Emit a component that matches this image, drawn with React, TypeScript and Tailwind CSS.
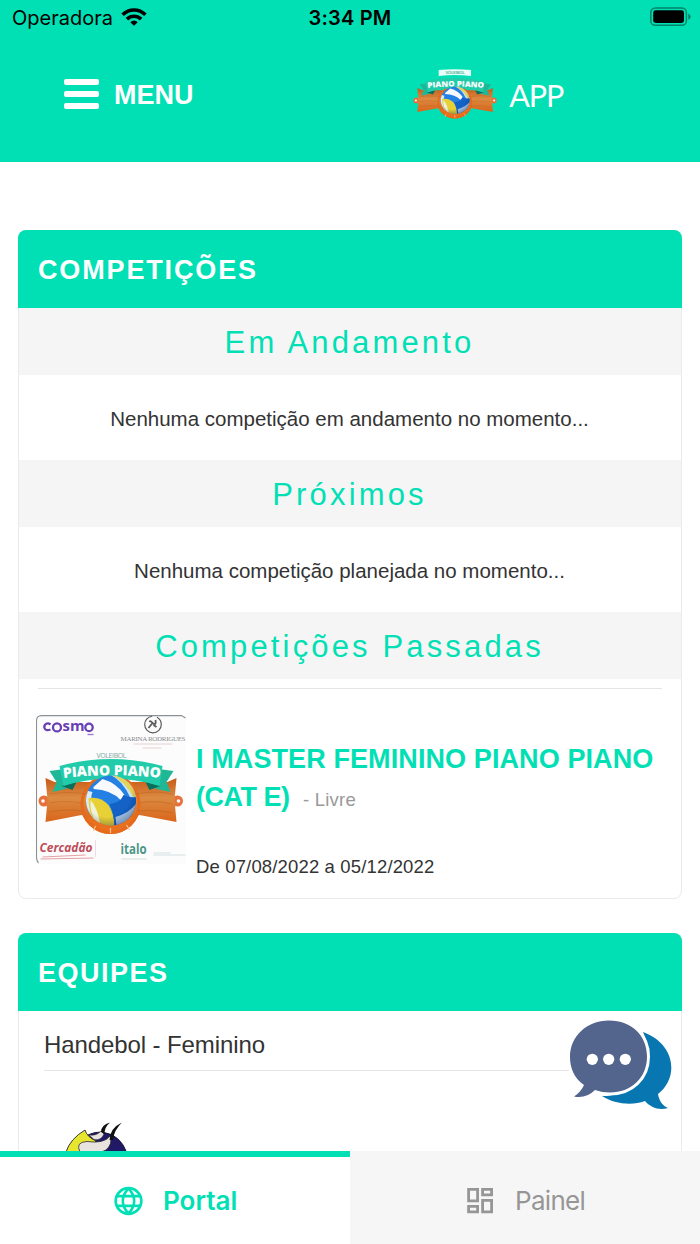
import type { ReactNode } from "react";

function WifiIcon() {
  return (
    <svg viewBox="0 0 26 20" className="h-5 w-[26px]" fill="none" stroke="#000" strokeWidth="3.6">
      <path d="M1.6 6.7 C8.2 0.4 17.8 0.4 24.4 6.7" />
      <path d="M5.9 11.1 C10 7.2 16 7.2 20.1 11.1" />
      <path d="M13 17.8 L9.3 14.2 Q13 11 16.7 14.2 Z" fill="#000" stroke="none" />
    </svg>
  );
}

function BatteryIcon() {
  return (
    <svg viewBox="0 0 42 20" className="h-5 w-[42px]">
      <rect x="0.8" y="0.9" width="35.6" height="17.4" rx="4.6" fill="none" stroke="#000" strokeOpacity="0.42" strokeWidth="1.5" />
      <rect x="3.2" y="3.3" width="30.8" height="12.6" rx="2.4" fill="#000" />
      <path d="M38.3 6.6 Q40.6 7.8 40.6 9.7 Q40.6 11.7 38.3 12.8 Z" fill="#000" fillOpacity="0.45" />
    </svg>
  );
}

function PianoArt({ id }: { id: string }) {
  return (
    <g>
      <defs>
        <linearGradient id={`${id}-wood`} x1="0" y1="0" x2="0" y2="1">
          <stop offset="0" stopColor="#c65a18" />
          <stop offset="0.45" stopColor="#dc8a42" />
          <stop offset="1" stopColor="#d9651a" />
        </linearGradient>
        <radialGradient id={`${id}-shade`} cx="0.42" cy="0.35" r="0.68">
          <stop offset="0.7" stopColor="#003" stopOpacity="0" />
          <stop offset="1" stopColor="#013" stopOpacity="0.3" />
        </radialGradient>
        <clipPath id={`${id}-ball`}>
          <circle cx="76.5" cy="62.5" r="25" />
        </clipPath>
      </defs>
      <circle cx="9.5" cy="63" r="5.5" fill="#e8713b" />
      <circle cx="143" cy="63" r="5.5" fill="#e8713b" />
      <circle cx="8.5" cy="63" r="1.8" fill="#fff" />
      <circle cx="144" cy="63" r="1.8" fill="#fff" />
      <circle cx="76" cy="66" r="30" fill="#e9701f" />
      <path d="M11 40 L20 44 L133 44 L142 40 L140 62 L142 84 L105 77 Q76 86 47 77 L11 84 L13 62 Z" fill={`url(#${id}-wood)`} />
      <circle cx="76" cy="66" r="28.5" fill="none" stroke="#e56a1c" strokeWidth="3" />
      <path d="M15 56 Q35 53 52 56 M15 65 Q30 62 47 65 M14 74 Q30 71 48 73 M102 56 Q120 52 138 56 M105 65 Q120 62 138 66 M103 73 Q120 71 138 75" fill="none" stroke="#b2601c" strokeOpacity="0.4" strokeWidth="1.2" />
      <path d="M76 90 V95 M61 88 L59 93 M92 87 L95 92" stroke="#ffc28c" strokeWidth="1.2" />
      <path d="M15 33 L30 31 L39 47 L31 51 L18 54 L22 44 Z M139 33 L124 31 L115 47 L122 51 L136 54 L132 44 Z" fill="#1fb897" />
      <path d="M27 48 L42 44 L38 52 Z M126 48 L111 44 L115 52 Z" fill="#07705d" />
      <path d="M25 28 Q76 14 128 28 L125 48 Q76 33 29 48 Z" fill="#22cba9" />
      <g clipPath={`url(#${id}-ball)`}>
        <rect x="50" y="36" width="54" height="54" fill="#2580e4" />
        <path d="M59 49 L68 41 Q82 45 90 57 L86 62 Q77 52 59 51 Z" fill="#f7f9fc" />
        <path d="M70 35 Q86 38 96 60 L103 60 Q99 43 83 35 Z" fill="#c9e2f7" />
        <path d="M81 35 Q98 43 103 57 L100 61 Q91 44 77 37 Z" fill="#e5d45a" />
        <path d="M50 52 L58 54 Q54 63 62 79 L56 83 Q49 72 50 52 Z" fill="#dcebf6" />
        <path d="M54 60 Q66 58 74 67 Q80 76 80 90 L62 88 Q54 76 54 60 Z" fill="#e8d136" />
        <path d="M56 62 Q63 69 66 88 L62 86 Q55 74 56 62 Z" fill="#eef2dd" />
        <path d="M75 66 Q86 65 89 57 Q98 61 103 58 V75 L88 90 H80 Q80 76 75 66 Z" fill="#1462c5" />
        <path d="M81 79 Q95 75 102 65 L100 76 Q91 85 82 88 Z" fill="#a9c9ea" />
      </g>
      <circle cx="76.5" cy="62.5" r="25" fill={`url(#${id}-shade)`} />
      <path id={`${id}-arc`} d="M29 40 Q77 34.5 127 40" fill="none" />
      <text fill="#fff" fontFamily="Open Sans, sans-serif" fontSize="14" fontWeight="800">
        <textPath href={`#${id}-arc`} startOffset="0" textLength="97">PIANO PIANO</textPath>
      </text>
    </g>
  );
}

function HeaderLogo() {
  return (
    <svg viewBox="3.5 5 145.5 92" preserveAspectRatio="none" className="h-[50px] w-[84px]">
      <path d="M48 7 Q76 4 104 7 V18 Q76 14 48 18 Z" fill="#e9fff9" />
      <text x="60" y="14" fill="#62b9a7" fontFamily="Open Sans, sans-serif" fontWeight="700" fontSize="7.5" textLength="33">VOLEIBOL</text>
      <PianoArt id="head" />
    </svg>
  );
}

function CompetitionImage() {
  return (
    <svg viewBox="0.5 0 151 149" className="h-[149px] w-[151px] shrink-0">
      <path d="M5 0.5 H150 V149 H4 Q1 148 0.5 145 V5 Q1 1 5 0.5Z" fill="#fcfcfd" />
      <path d="M3 148 Q1 146 1 142 V6 Q1 0.6 6 0.6 H146 L150 3" fill="none" stroke="#8a9094" strokeWidth="1.1" />
      <g fill="none" stroke="#6740b4" strokeWidth="2.3">
        <path d="M15 9.5 Q13 8 11.5 8.5 Q8.5 9.5 8.8 12.5 Q10 16.5 15 14.5" />
        <circle cx="21.5" cy="12.4" r="4" />
        <circle cx="53.5" cy="12.4" r="3.7" />
      </g>
      <text x="27" y="16" fill="#6740b4" fontFamily="Open Sans, sans-serif" fontSize="14" fontWeight="700" textLength="22" lengthAdjust="spacingAndGlyphs">sm</text>
      <path d="M52 19.5 H58" stroke="#9a7bd0" strokeWidth="1.4" />
      <g fill="none" stroke="#5b5b5d" strokeWidth="1.2">
        <circle cx="117.5" cy="9.5" r="8.3" strokeDasharray="38 5" />
        <path d="M113 13 L117 8 M117 8 Q121 11 120 5 M117 8 Q115 5 114 7 M118 10 L121 12" strokeWidth="1.8" />
      </g>
      <text x="85" y="26" fill="#8b8b8d" fontFamily="Liberation Serif, serif" fontSize="7" textLength="65">MARINA RODRIGUES</text>
      <path d="M98 29 H137 M107 33 H126" stroke="#dfc6c6" strokeWidth="0.8" />
      <text x="61" y="43" fill="#7fa69e" fontFamily="Open Sans, sans-serif" fontSize="7" textLength="30">VOLEIBOL</text>
      <g transform="translate(-1 23)"><PianoArt id="event" /></g>
      <text x="4" y="137" fill="#bd4d58" fontFamily="Open Sans, sans-serif" fontSize="12" fontWeight="700" fontStyle="italic" textLength="53" lengthAdjust="spacingAndGlyphs">Cercadão</text>
      <path d="M7 142 L50 140 M5 144 L58 143" stroke="#e5a0a5" strokeWidth="1" />
      <path d="M60 125 V142" stroke="#f1d9dc" strokeWidth="1" />
      <text x="85" y="139" fill="#4b9587" fontFamily="Open Sans, sans-serif" fontSize="14" fontWeight="700" textLength="26" lengthAdjust="spacingAndGlyphs">italo</text>
      <path d="M86 144 H111 M118 138 H135 M118 140 H150" stroke="#d5dfdf" strokeWidth="1" />
    </svg>
  );
}

function ChatIcon() {
  return (
    <svg viewBox="0 0 108 94" className="h-[94px] w-[108px]">
      <path d="M76 13 C109 25 112 59 91 75 C92 82 96 87 101 89 C92 92 83 88 78 82 C65 87 47 85 35 77 C68 77 91 46 76 13Z" fill="#0876b0" stroke="#fff" strokeWidth="5" paintOrder="stroke" />
      <path d="M42 1.5 C65 1.5 80 17 80 37.5 C80 59 64 73.5 43 73.5 Q35 73.5 28 71 Q19 80 7 77.5 Q14 73 17 66 C7 59 3 49 3 38 C3 17 20 1.5 42 1.5Z" fill="#53658d" stroke="#fff" strokeWidth="6" paintOrder="stroke" />
      <g fill="#fff"><circle cx="25.3" cy="40.3" r="5.6" /><circle cx="41.7" cy="40.3" r="5.6" /><circle cx="58.3" cy="40.3" r="5.6" /></g>
    </svg>
  );
}

function TeamCrest() {
  return (
    <svg viewBox="0 0 64 30" className="h-[30px] w-16">
      <path d="M21 14 Q30 9 39 10.5 Q55 13 61.5 30 H20Z" fill="#211866" stroke="#161638" />
      <path d="M1 30 Q5 17 20 8 Q22 15 31 19 L22 30Z" fill="#e7e52e" stroke="#373936" />
      <path d="M15 30 Q10 20 22 19.5 Q39 22 45 14 Q48 22 41 28 L34 31 H15Z" fill="#e8e3df" stroke="#2b2930" strokeWidth="0.8" />
      <path d="M24 13 Q32 14 36 9 L39 12 Q36 19 29 17.5Z" fill="#e8e3df" stroke="#2b2930" strokeWidth="0.6" />
      <path d="M36 10 Q36 3 45 0.5 Q39.5 5 39.5 12Z M44.5 18 Q45 6 57 0.5 Q49 8 48 18Z" fill="#111" />
    </svg>
  );
}

function GlobeIcon() {
  return (
    <svg viewBox="0 0 30 30" className="size-[30px]" fill="none" stroke="#01e0b4" strokeWidth="2.7">
      <circle cx="15.5" cy="15" r="12.8" />
      <path d="M3.7 10.2 H27.3 M3.7 19.8 H27.3 M15.5 2.4 C8 10.5 8 19.5 15.5 27.6 M15.5 2.4 C23 10.5 23 19.5 15.5 27.6" />
    </svg>
  );
}

function DashboardIcon() {
  return (
    <svg viewBox="0 0 26 26" className="size-[26px]" fill="none" stroke="#969696" strokeWidth="2.8">
      <path d="M1.6 1.4 H10.6 V12.8 H1.6Z M15.6 1.4 H24.6 V6.8 H15.6Z M15.6 12.4 H24.6 V23.9 H15.6Z M1.6 18.3 H10.6 V23.9 H1.6Z" />
    </svg>
  );
}

function CardHeader({ children, spacing }: { children: ReactNode; spacing: string }) {
  return (
    <h2 className={`-mx-px -mt-px flex h-[78px] items-center rounded-t-lg bg-[#01e0b4] pt-[2px] pl-[20px] text-[27px] font-bold text-white ${spacing}`}>
      {children}
    </h2>
  );
}

function SectionTitle({ children }: { children: ReactNode }) {
  return (
    <h3 className="flex h-[67px] items-center justify-center bg-[#f5f5f5] pt-1 pr-px text-[31px] tracking-[3.15px] text-[#01e0b4]">
      {children}
    </h3>
  );
}

function EmptyMessage({ children }: { children: ReactNode }) {
  return <p className="flex h-[85px] items-center justify-center pt-[3px] pr-px text-[20.5px]">{children}</p>;
}

export default function App() {
  return (
    <div className="flex h-[1244px] w-[700px] flex-col overflow-hidden bg-white font-['Liberation_Sans',sans-serif] text-[#333]">
      <header className="h-[162px] shrink-0 bg-[#01e0b4]">
        <div className="grid h-9 grid-cols-3 items-center pr-2 pl-3 font-['Inter',sans-serif] text-[20px] text-black">
          <div className="flex items-center gap-2"><span>Operadora</span><WifiIcon /></div>
          <time className="pr-[4px] text-center font-semibold tracking-[0.2px]">3:34 PM</time>
          <div className="flex justify-end pb-[2px]"><BatteryIcon /></div>
        </div>
        <div className="flex h-[116px] items-center justify-between pr-[137px] pl-16 text-white">
          <button className="flex items-center gap-[15px]">
            <span className="flex w-[35px] flex-col gap-[5.7px]">
              <span className="h-[6px] rounded-[2px] bg-white" />
              <span className="h-[6px] rounded-[2px] bg-white" />
              <span className="h-[6px] rounded-[2px] bg-white" />
            </span>
            <span className="pt-[3px] text-[27px] font-bold">MENU</span>
          </button>
          <div className="flex items-center gap-[12px]">
            <HeaderLogo />
            <span className="pt-[3px] font-['Lato',sans-serif] text-[30.5px] tracking-[-1.2px]">APP</span>
          </div>
        </div>
      </header>
      <main className="flex min-h-0 flex-1 flex-col gap-[34px] overflow-hidden px-[18px] pt-[68px]">
        <section className="h-[669px] shrink-0 rounded-lg border border-[#e9ecec]">
          <CardHeader spacing="tracking-[1.85px]">COMPETIÇÕES</CardHeader>
          <SectionTitle>Em Andamento</SectionTitle>
          <EmptyMessage>Nenhuma competição em andamento no momento...</EmptyMessage>
          <SectionTitle>Próximos</SectionTitle>
          <EmptyMessage>Nenhuma competição planejada no momento...</EmptyMessage>
          <SectionTitle>Competições Passadas</SectionTitle>
          <hr className="mx-[19px] mt-[9px] border-[#e5e5e5]" />
          <article className="flex gap-[9px] pt-[26px] pl-[17px]">
            <CompetitionImage />
            <div className="pt-[26px]">
              <h4 className="text-[27px] leading-[37.5px] font-bold tracking-[0.1px] text-[#01e0b4]">
                I MASTER FEMININO PIANO PIANO<br /><span className="tracking-[-0.5px]">(CAT E)</span> <span className="ml-[6px] text-[18.5px] font-normal tracking-[0.2px] text-[#999]">- Livre</span>
              </h4>
              <p className="mt-[37px] text-[18.5px] leading-6 tracking-[0.15px]">De 07/08/2022 a 05/12/2022</p>
            </div>
          </article>
        </section>
        <section className="h-[400px] shrink-0 rounded-lg border border-[#e9ecec]">
          <CardHeader spacing="tracking-[1.5px]">EQUIPES</CardHeader>
          <div className="mx-[25px] flex h-[60px] items-center border-b border-[#e5e5e5] pt-[9px] text-[24px] tracking-[-0.1px]">
            Handebol - Feminino
          </div>
          <div className="pt-[51px] pl-[46px]"><TeamCrest /></div>
        </section>
      </main>
      <nav className="grid h-[93px] shrink-0 grid-cols-2 font-['Inter',sans-serif] text-[26px]">
        <a className="flex items-center gap-5 border-t-[6px] border-[#01e0b4] bg-white pl-[113px] font-semibold text-[#01e0b4]">
          <GlobeIcon /><span>Portal</span>
        </a>
        <a className="flex items-center gap-[22px] bg-[#f6f6f6] pt-[6px] pl-[117px] text-[#969696]">
          <DashboardIcon /><span className="tracking-[-0.7px]">Painel</span>
        </a>
      </nav>
      <button aria-label="Chat" className="fixed top-[1019px] left-[567px]"><ChatIcon /></button>
    </div>
  );
}
